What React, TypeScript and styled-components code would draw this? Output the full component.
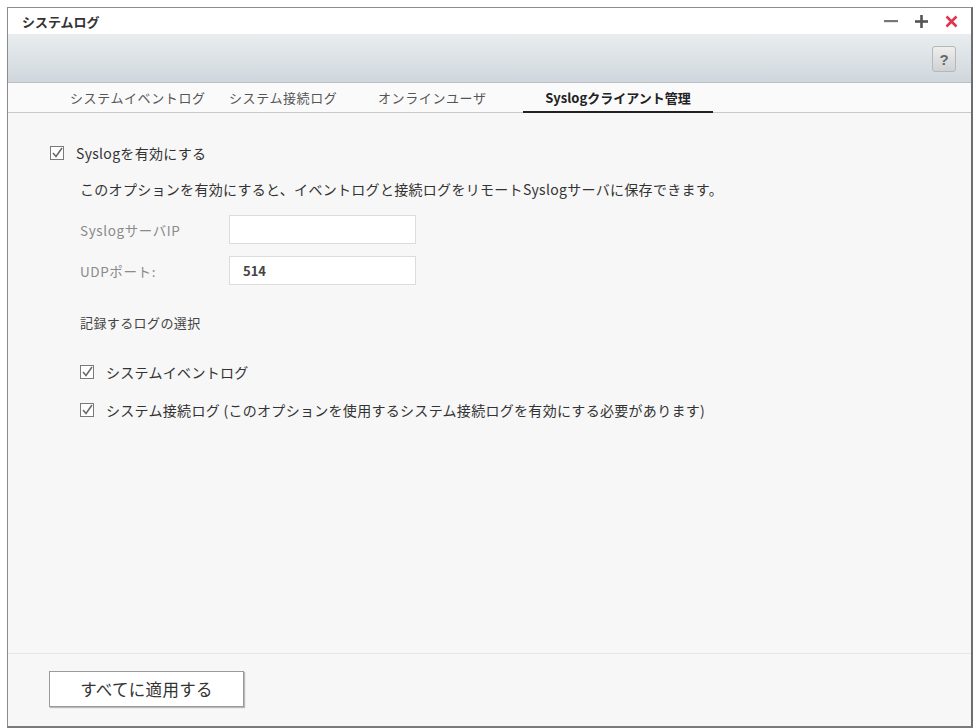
import React from 'react';
import styled, { createGlobalStyle } from 'styled-components';

const GlobalStyle = createGlobalStyle`
    html, body {
        margin: 0;
        padding: 0;
        background: #ffffff;
    }
    body {
        font-family: "Noto Sans CJK JP", "Noto Sans", "Liberation Sans", sans-serif;
        color: #333;
    }
`

const Window = styled.div`
    margin: 7px 0 0 7px;
    width: 963px;
    height: 718px;
    border: 1px solid #8c8c8c;
    border-right: 2px solid #6e6e6e;
    border-bottom: 2px solid #7a7a7a;
    display: flex;
    flex-direction: column;
    background: #f7f7f7;
`
const TitleBar = styled.div`
    height: 26px;
    background: #ffffff;
    display: flex;
    align-items: center;
    justify-content: space-between;
    padding: 0 13px 0 14px;
`
const Title = styled.h1`
    margin: 0;
    font-size: 13px;
    font-weight: 700;
    color: #333;
`
const Controls = styled.div`
    display: flex;
    align-items: center;
    gap: 17px;
`
const Toolbar = styled.div`
    height: 48px;
    background: linear-gradient(#e9edf0, #d0d7dc);
    border-bottom: 1px solid #b9bfc4;
    display: flex;
    align-items: center;
    justify-content: flex-end;
    padding-right: 15px;
`
const HelpButton = styled.button`
    width: 24px;
    height: 26px;
    padding: 0;
    margin-top: 2px;
    border: 1px solid #b4b8bb;
    border-radius: 3px;
    background: linear-gradient(#eeeeee, #cfd1d3);
    color: #666;
    font-family: "Liberation Sans", sans-serif;
    font-weight: 700;
    font-size: 15px;
`
const TabBar = styled.div`
    height: 29px;
    background: #fafafa;
    border-bottom: 1px solid #c9c9c9;
    display: grid;
    grid-template-columns: 159px 149px 157px 190px;
    align-items: stretch;
    padding-left: 50px;
`
const Tab = styled.div<{ $active?: boolean }>`
    display: flex;
    align-items: center;
    justify-content: ${p => (p.$active ? 'center' : 'flex-start')};
    padding-left: ${p => (p.$active ? '0' : '12px')};
    font-size: 13px;
    letter-spacing: ${p => (p.$active ? '0' : '0.6px')};
    color: ${p => (p.$active ? '#222' : '#555')};
    font-weight: ${p => (p.$active ? 700 : 400)};
    border-bottom: 2px solid ${p => (p.$active ? '#222' : 'transparent')};
    margin-bottom: -1px;
    white-space: nowrap;
`
const Content = styled.div`
    flex: 1;
    padding: 28px 0 0 42px;
    display: flex;
    flex-direction: column;
`
const CheckRow = styled.label`
    display: flex;
    align-items: center;
    gap: 12px;
    height: 24px;
    font-size: 14px;
    letter-spacing: 0.3px;
    color: #333;
`
const Section = styled.div`
    padding-left: 30px;
    display: flex;
    flex-direction: column;
`
const Description = styled.p`
    margin: 14px 0 0;
    font-size: 14px;
    letter-spacing: 0.3px;
    color: #333;
`
const FieldRow = styled.div<{ $first?: boolean }>`
    display: grid;
    grid-template-columns: 149px 187px;
    align-items: center;
    margin-top: ${p => (p.$first ? '16px' : '12px')};
`
const FieldLabel = styled.span`
    font-size: 13.5px;
    letter-spacing: 0.6px;
    color: #8a8a8a;
`
const TextBox = styled.div`
    height: 27px;
    background: #fff;
    border: 1px solid #dcdcdc;
    display: flex;
    align-items: center;
    padding-left: 13px;
    font-size: 13px;
    font-weight: 700;
    color: #444;
`
const SubTitle = styled.div`
    margin-top: 28px;
    font-size: 13px;
    letter-spacing: 0.4px;
    color: #444;
`
const SubList = styled.div`
    display: flex;
    flex-direction: column;
    gap: 14px;
    margin-top: 28px;
`
const Footer = styled.div`
    height: 72px;
    border-top: 1px solid #e6e6e6;
    display: flex;
    align-items: center;
    padding-left: 41px;
`
const ApplyButton = styled.button`
    width: 195px;
    height: 36px;
    background: #fff;
    border: 1px solid #9a9a9a;
    box-shadow: 1px 1px 1px rgba(0, 0, 0, 0.25);
    font-family: "Noto Sans CJK JP", sans-serif;
    font-size: 16.5px;
    letter-spacing: 0.3px;
    color: #333;
    margin-top: -2px;
`

const CheckIcon = () => (
    <svg width="14" height="14" viewBox="0 0 14 14">
        <rect x="0.5" y="0.5" width="13" height="13" fill="#fff" stroke="#7a7a7a" />
        <path d="M3 7 L6 10.5 L12 2" fill="none" stroke="#6a6a6a" strokeWidth="1.6" />
    </svg>
)

const App: React.FC = () => {
    return (
        <>
            <GlobalStyle />
            <Window>
                <TitleBar>
                    <Title>システムログ</Title>
                    <Controls>
                        <svg width="14" height="14" viewBox="0 0 14 14">
                            <rect x="0" y="6" width="14" height="2.2" fill="#777" />
                        </svg>
                        <svg width="13" height="13" viewBox="0 0 13 13">
                            <rect x="0" y="5.2" width="13" height="2.6" fill="#555" />
                            <rect x="5.2" y="0" width="2.6" height="13" fill="#555" />
                        </svg>
                        <svg width="13" height="13" viewBox="0 0 13 13">
                            <path d="M1.5 1.5 L11.5 11.5 M11.5 1.5 L1.5 11.5" stroke="#e0334c" strokeWidth="2.6" />
                        </svg>
                    </Controls>
                </TitleBar>
                <Toolbar>
                    <HelpButton>?</HelpButton>
                </Toolbar>
                <TabBar>
                    <Tab>システムイベントログ</Tab>
                    <Tab>システム接続ログ</Tab>
                    <Tab>オンラインユーザ</Tab>
                    <Tab $active>Syslogクライアント管理</Tab>
                </TabBar>
                <Content>
                    <CheckRow>
                        <CheckIcon />
                        <span>Syslogを有効にする</span>
                    </CheckRow>
                    <Section>
                        <Description>
                            このオプションを有効にすると、イベントログと接続ログをリモートSyslogサーバに保存できます。
                        </Description>
                        <FieldRow $first>
                            <FieldLabel>SyslogサーバIP</FieldLabel>
                            <TextBox />
                        </FieldRow>
                        <FieldRow>
                            <FieldLabel>UDPポート:</FieldLabel>
                            <TextBox>514</TextBox>
                        </FieldRow>
                        <SubTitle>記録するログの選択</SubTitle>
                        <SubList>
                            <CheckRow>
                                <CheckIcon />
                                <span>システムイベントログ</span>
                            </CheckRow>
                            <CheckRow>
                                <CheckIcon />
                                <span>システム接続ログ (このオプションを使用するシステム接続ログを有効にする必要があります)</span>
                            </CheckRow>
                        </SubList>
                    </Section>
                </Content>
                <Footer>
                    <ApplyButton>すべてに適用する</ApplyButton>
                </Footer>
            </Window>
        </>
    );
};

export default App;
